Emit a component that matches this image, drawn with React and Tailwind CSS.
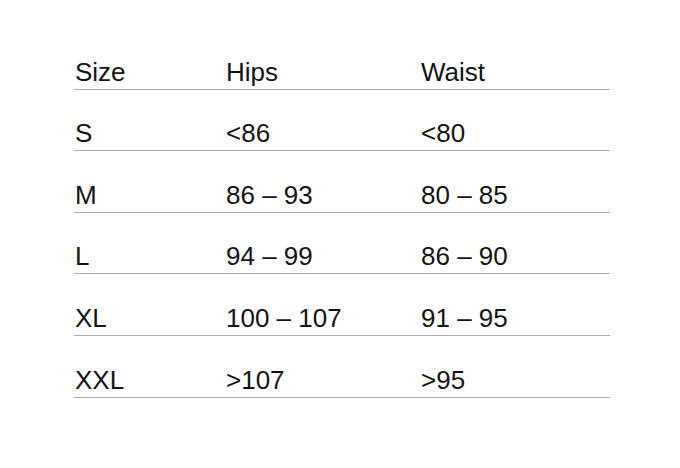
const rows = [
  ["S", "<86", "<80"],
  ["M", "86 – 93", "80 – 85"],
  ["L", "94 – 99", "86 – 90"],
  ["XL", "100 – 107", "91 – 95"],
  ["XXL", ">107", ">95"],
];

const Row = ({ cells }) => (
  <div className="flex h-[61.6px] items-end border-b border-[#ababab] pb-[2px] pl-[1px]">
    <div className="w-[151px]">{cells[0]}</div>
    <div className="w-[195px]">{cells[1]}</div>
    <div className="flex-1">{cells[2]}</div>
  </div>
);

export default function App() {
  return (
    <div
      className="w-[680px] h-[468px] bg-white pt-[28px] pl-[74px] text-[26px] leading-[30px] text-[#141414]"
      style={{ fontFamily: '"Liberation Sans", Arial, sans-serif' }}
    >
      <div className="w-[536px]">
        <Row cells={["Size", "Hips", "Waist"]} />
        {rows.map((r) => (
          <Row key={r[0]} cells={r} />
        ))}
      </div>
    </div>
  );
}
